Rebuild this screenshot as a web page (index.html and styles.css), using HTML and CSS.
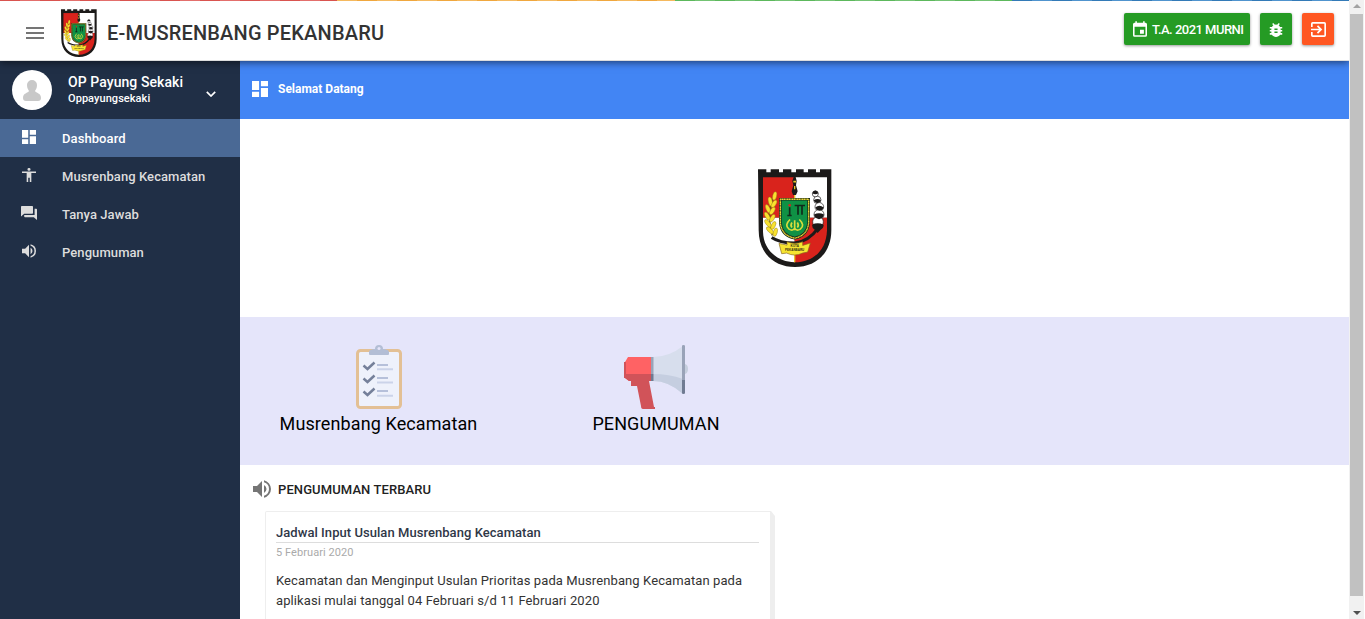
FILE: index.html
```html
<!DOCTYPE html>
<html lang="id">
<head>
<meta charset="utf-8">
<title>E-Musrenbang Pekanbaru</title>
<link rel="stylesheet" href="styles.css">
</head>
<body>
<svg class="defs" aria-hidden="true">
  <symbol id="tiles" viewBox="3 3 18 18"><path d="M3 13h8V3H3zM3 21h8v-6H3zM13 21h8V11h-8zM13 3v6h8V3z"/></symbol>
  <symbol id="sound" viewBox="3 3 18 18"><path d="M3 9v6h4l5 5V4L7 9zM16.500 12A4.500 4.500 0 0 0 14 7.970v8.050A4.500 4.500 0 0 0 16.500 12zM14 3.230v2.060a7 7 0 0 1 0 13.420v2.060a9 9 0 0 0 0-17.540z"/></symbol>
</svg>
<div class="app">
  <div class="page">
    <div class="stripe"><i></i><i></i><i></i><i></i></div>
    <header class="topbar">
      <svg class="burger" viewBox="0 0 18 12"><path d="M0 0h18v2H0zM0 5h18v2H0zM0 10h18v2H0z"/></svg>
      <svg class="logo" viewBox="54 26 222 295" preserveAspectRatio="none"><use href="#crest"/></svg>
      <h1 class="brand">E-MUSRENBANG PEKANBARU</h1>
      <div class="actions">
        <button class="btn year"><svg viewBox="3 1 18 20"><path d="M17 12h-5v5h5zM16 1v2H8V1H6v2H5a2 2 0 0 0-2 2v14a2 2 0 0 0 2 2h14a2 2 0 0 0 2-2V5a2 2 0 0 0-2-2h-1V1zM19 19H5V8h14z"/></svg><span>T.A. 2021 MURNI</span></button>
        <button class="btn square"><svg class="bug" viewBox="4 3 16 18"><path d="M20 8h-2.810a6 6 0 0 0-1.820-1.960L17 4.410 15.590 3l-2.170 2.170a6 6 0 0 0-2.830 0L8.410 3 7 4.410l1.620 1.630A6 6 0 0 0 6.810 8H4v2h2.090A6 6 0 0 0 6 11v1H4v2h2v1q0 .5.090 1H4v2h2.810a6 6 0 0 0 10.380 0H20v-2h-2.090q.09-.5.090-1v-1h2v-2h-2v-1q0-.5-.09-1H20zM14 16h-4v-2h4zM14 12h-4v-2h4z"/></svg></button>
        <button class="btn square exit"><svg class="out" viewBox="3 3 18 18"><path d="M10.090 15.590 11.500 17l5-5-5-5-1.410 1.410L12.670 11H3v2h9.670zM19 3H5a2 2 0 0 0-2 2v4h2V5h14v14H5v-4H3v4a2 2 0 0 0 2 2h14a2 2 0 0 0 2-2V5a2 2 0 0 0-2-2z"/></svg></button>
      </div>
    </header>
    <div class="body">
      <aside class="sidebar">
        <div class="user">
          <svg class="avatar" viewBox="0 0 40 40"><circle cx="20" cy="20" r="20" fill="#fff"/><path fill="#c8c8c8" d="M20 10a5 5 0 0 1 5 5c0 3-1 4-2 6 1 2 6 2 6 7 0 2-1 3-3 3H14c-2 0-3-1-3-3 0-5 5-5 6-7-1-2-2-3-2-6a5 5 0 0 1 5-5z"/></svg>
          <div class="who"><strong>OP Payung Sekaki</strong><small>Oppayungsekaki</small></div>
          <svg class="chev" viewBox="0 0 10 6"><path d="M.8.800 5 5 9.200.800"/></svg>
        </div>
        <nav>
          <a class="item active"><svg><use href="#tiles"/></svg><span>Dashboard</span></a>
          <a class="item"><svg viewBox="3 2 18 20" preserveAspectRatio="none"><path d="M12 2a2 2 0 1 1 0 4 2 2 0 0 1 0-4zM21 9h-6v13h-2v-6h-2v6H9V9H3V7h18z"/></svg><span>Musrenbang Kecamatan</span></a>
          <a class="item"><svg class="chat" viewBox="2 2 20 20" preserveAspectRatio="none"><path d="M21 6h-2v9H6v2a1 1 0 0 0 1 1h11l4 4V7a1 1 0 0 0-1-1zM17 12V3a1 1 0 0 0-1-1H3a1 1 0 0 0-1 1v14l4-4h10a1 1 0 0 0 1-1z"/></svg><span>Tanya Jawab</span></a>
          <a class="item"><svg><use href="#sound"/></svg><span>Pengumuman</span></a>
        </nav>
      </aside>
      <main class="content">
        <div class="heading"><svg><use href="#tiles"/></svg><span>Selamat Datang</span></div>
        <div class="hero">
          <svg class="crest" viewBox="54 26 222 295" preserveAspectRatio="none">
            <g id="crest">
              <path fill="#1c1a19" d="M54 27H79V36H92V27H117V36H129V27H154V36H168V27H191V36H204V27H228V36H240V27H274V210C274 279 228 321 165 321S56 279 56 210Z"/>
              <path fill="#d9231c" d="M69 51H164V173H69Z"/>
              <path fill="#fff" d="M164 51H261V173H164ZM69 173H164V307C112 305 70 270 69 215Z"/>
              <path fill="#d9231c" d="M164 173H261V210C259 269 222 306 164 307Z"/>
              <path fill="#e8c72d" d="M162 51h4v64h-4zM162 280h4v27h-4z"/>
              <path fill="#1c1a19" d="M161 50h6l3 12-2 13 5 18-5 11h-9l-4-11 5-18-3-13z"/>
              <path fill="#e8c72d" d="M160 61h8v6h-8zM162 77h4v10h-4z"/>
              <path fill="none" stroke="#1c1a19" stroke-width="9" d="M95 232Q118 248 164 249Q205 245 234 205"/>
              <path fill="none" stroke="#6b5614" stroke-width="4" d="M104 105Q77 158 97 226"/>
              <g fill="#f9e22e" stroke="#8a7316" stroke-width="1.200">
                <ellipse cx="104" cy="107" rx="6" ry="13" transform="rotate(12 104 107)"/>
                <ellipse cx="91" cy="124" rx="6" ry="14" transform="rotate(-12 91 124)"/><ellipse cx="102" cy="131" rx="6" ry="13" transform="rotate(32 102 131)"/>
                <ellipse cx="84" cy="146" rx="6" ry="14" transform="rotate(-22 84 146)"/><ellipse cx="97" cy="152" rx="6" ry="13" transform="rotate(32 97 152)"/>
                <ellipse cx="82" cy="168" rx="6" ry="14" transform="rotate(-30 82 168)"/><ellipse cx="97" cy="174" rx="6" ry="13" transform="rotate(30 97 174)"/>
                <ellipse cx="84" cy="190" rx="6" ry="14" transform="rotate(-38 84 190)"/><ellipse cx="100" cy="196" rx="6" ry="13" transform="rotate(25 100 196)"/>
                <ellipse cx="90" cy="211" rx="6" ry="14" transform="rotate(-45 90 211)"/><ellipse cx="106" cy="216" rx="6" ry="13" transform="rotate(15 106 216)"/>
              </g>
              <g fill="#fff" stroke="#1c1a19" stroke-width="2">
                <circle cx="226" cy="101" r="9"/><circle cx="232" cy="119" r="11"/><circle cx="238" cy="140" r="13"/><circle cx="237" cy="163" r="15"/><circle cx="234" cy="185" r="16"/>
              </g>
              <path fill="#1c1a19" d="M217 99q2-8 9-8t9 8q-9 6-18 0zM221 120q12-8 22 0-3 8-11 9-8-1-11-9zM226 142q12-10 25 0-3 9-13 10-9-1-12-10zM222 163q15-8 30 0-2 12-15 14-13-2-15-14zM216 194q17-9 35 0 0 10-9 15l-9 10-9-10q-8-5-8-15z"/>
              <path fill="#0f9145" stroke="#172b1c" stroke-width="8" d="M121 117H206V188Q202 227 164 234Q125 227 121 188Z"/>
              <path fill="none" stroke="#e9d435" stroke-width="4" stroke-dasharray="4 1" d="M121 117H206V188Q202 227 164 234Q125 227 121 188Z"/>
              <path fill="none" stroke="#10291a" stroke-width="5" d="M149 141v27M142 166h13M164 136h31M174 136v28M186 136v28"/>
              <circle cx="149" cy="135" r="4" fill="#d9231c"/>
              <path fill="none" stroke="#d9dc3d" stroke-width="5" d="M150 178q-18 17-3 29 12 7 17-3 5 10 17 3 15-12-3-29M164 180v30M156 187q-6 9 0 15M172 187q6 9 0 15"/>
              <path fill="#f6e431" stroke="#8a671c" stroke-width="2" d="M117 250L141 255V245Q165 255 188 245V256L211 249L203 276L188 279Q164 291 140 279L125 281Z"/>
              <g class="crest-text"><text x="164" y="260">KOTA</text><text x="164" y="273">PEKANBARU</text></g>
            </g>
          </svg>
        </div>
        <div class="menu">
          <a class="tile"><svg viewBox="0 0 64 64">
            <rect x="10.500" y="5.500" width="43" height="57" rx="3" fill="#eef1fb" stroke="#e3c094" stroke-width="3"/>
            <path fill="#b3bed5" d="M22 9V7c0-2 3-3 6-3a4 4 0 0 1 8 0c3 0 6 1 6 3v2q0 1-1 1H23q-1 0-1-1z"/><circle cx="32" cy="3.500" r="1.500" fill="#e5e5fa"/>
            <path fill="none" stroke="#75809a" stroke-width="2.500" d="m16.500 20.500 4 3.500 7-6.500m-11 16 4 3.500 7-6.500m-11 16 4 3.500 7-6.500"/>
            <path stroke="#b6c0da" stroke-width="2" d="M30 20h11M30 33h11M30 46h11"/><path stroke="#cbd3e9" stroke-width="2" d="M30 24.300h16M30 37.500h16M30 50.700h16"/>
          </svg><span>Musrenbang Kecamatan</span></a>
          <a class="tile second"><svg viewBox="0 0 64 64">
            <path fill="#c5cedd" d="M60 19q4 0 4 5t-4 5z"/><path fill="#d7deed" d="M29 12Q45 12 59 1V49Q45 36 29 36Z"/><path fill="#c5cee0" d="M29 29Q45 29 59 34V49Q45 36 29 36Z"/>
            <path fill="#ff6264" d="M4 12H28V36H5L1 33H0V17H1Z"/><path fill="#d15359" d="M0 29H28V36H25L30 62H31V64H19Q17 64 17 61L13 41H7V36H5L1 33H0Z"/>
            <path fill="#d15359" d="M0 17h2v16H0z"/><path fill="#99a3b8" d="M27 12h2.500v17H27zM58 1q0-1 1.500-1T61 1v34h-3z"/><path fill="#707b92" d="M27 29h2.500v7H27zM58 35h3v13q0 1-1.500 1T58 48z"/>
          </svg><span>PENGUMUMAN</span></a>
        </div>
        <section class="news">
          <h2><svg><use href="#sound"/></svg><span>PENGUMUMAN TERBARU</span></h2>
          <div class="cardwrap">
            <article class="card">
              <h3><span>Jadwal Input Usulan Musrenbang Kecamatan</span></h3>
              <time>5 Februari 2020</time>
              <p><span>Kecamatan dan Menginput Usulan Prioritas pada Musrenbang Kecamatan pada</span><br><span>aplikasi mulai tanggal 04 Februari s/d 11 Februari 2020</span></p>
            </article>
            <div class="edge"></div>
          </div>
        </section>
      </main>
    </div>
  </div>
  <div class="scroll"><i class="up"></i><div class="thumb"></div><i class="down"></i></div>
</div>
</body>
</html>
```
FILE: styles.css
```css
* { box-sizing: border-box; }
body { margin: 0; font-family: Roboto, sans-serif; overflow: hidden; color: #333; }
svg { display: block; fill: currentColor; flex: none; }
span, strong, small, time { white-space: nowrap; }
.defs { position: absolute; width: 0; height: 0; }
.crest-text { font: bold 9px "Liberation Sans", sans-serif; text-anchor: middle; fill: #322a15; }
.app { display: flex; width: 1365px; height: 619px; }
.page { width: 1349px; display: flex; flex-direction: column; overflow: hidden; }
.stripe { display: flex; height: 1px; flex: none; position: relative; z-index: 2; }
.stripe i { flex: 1; background: repeating-linear-gradient(90deg, #d9534f 0 20px, #e36f6c 20px 40px); }
.stripe i:nth-child(2) { background: repeating-linear-gradient(90deg, #f5b95f 0 20px, #f0a73e 20px 40px); }
.stripe i:nth-child(3) { background: repeating-linear-gradient(90deg, #5cb85c 0 20px, #73c373 20px 40px); }
.stripe i:nth-child(4) { background: repeating-linear-gradient(90deg, #337ab7 0 20px, #5094ce 20px 40px); }
.topbar { height: 60px; flex: none; display: flex; align-items: flex-start; background: #fff; border-bottom: 1px solid #ddd; box-shadow: 0 1px 8px rgba(0,0,0,.6); position: relative; padding-left: 26px; }
.burger { width: 18px; height: 12px; margin-top: 26px; color: #757575; }
.logo { width: 36px; height: 48px; margin: 8px 10px 0 17px; }
.brand { margin: 20px 0 0; font-size: 20px; line-height: 24px; font-weight: 500; letter-spacing: .18px; color: #333; white-space: nowrap; }
.actions { display: flex; gap: 10px; margin: 12px 15px 0 auto; }
.btn { height: 32px; border: 0; border-radius: 2px; background: #259b24; color: #fff; padding: 0; display: flex; align-items: center; justify-content: center; box-shadow: 0 1px 3px rgba(0,0,0,.4); font: 500 13px/18px Roboto, sans-serif; }
.year { width: 126px; gap: 5px; justify-content: flex-start; padding-left: 9px; letter-spacing: -.52px; }
.year svg { width: 14px; height: 16px; }
.year span { padding-top: 1px; }
.square { width: 32px; }
.exit { background: #ff5722; }
.bug { width: 14px; height: 14px; margin-top: 2px; }
.out { width: 15px; height: 15px; margin-top: 1px; }
.body { display: flex; flex: 1; min-height: 0; }
.sidebar { width: 240px; background: #202f46; color: #ddd; flex: none; }
.user { height: 58px; display: flex; padding: 9px 24px 0 12px; color: #fff; }
.avatar { width: 40px; height: 40px; }
.who { display: flex; flex-direction: column; margin-left: 16px; padding-top: 3px; }
.who strong { font-size: 14px; line-height: 18px; font-weight: 500; letter-spacing: .07px; }
.who small { font-size: 11px; line-height: 16px; font-weight: 500; letter-spacing: .06px; }
.chev { width: 10px; height: 6px; margin: 21px 0 0 auto; fill: none; stroke: currentColor; stroke-width: 1.700; }
.item { display: flex; height: 38px; align-items: center; padding-left: 22px; font-size: 13px; font-weight: 500; letter-spacing: .08px; }
.item svg { width: 14px; height: 14px; margin: 0 26px 3px 0; }
.item .chat { width: 16px; height: 14px; margin-left: -1px; margin-right: 25px; }
.active { background: #4a6995; color: #fff; }
.content { flex: 1; background: #fff; min-width: 0; }
.heading { height: 58px; background: #4285f4; color: #fff; display: flex; align-items: center; padding: 0 0 2px 12px; font-size: 12px; font-weight: 700; gap: 10px; }
.heading svg { width: 16px; height: 16px; }
.hero { height: 198px; display: flex; justify-content: center; padding-top: 50px; }
.crest { width: 74px; height: 98px; }
.menu { height: 148px; background: #e5e5fa; display: flex; padding-top: 28px; color: #000; }
.tile { width: 277px; display: flex; flex-direction: column; align-items: center; font-size: 18px; line-height: 30px; letter-spacing: .1px; }
.tile svg { width: 64px; height: 64px; }
.second { width: 278px; }
.news h2 { margin: 0; height: 46px; padding: 2px 0 0 13px; display: flex; align-items: center; gap: 7px; font-size: 13px; font-weight: 500; letter-spacing: .1px; color: #222; }
.news h2 svg { width: 18px; height: 18px; color: #757575; }
.cardwrap { margin-left: 25px; display: flex; height: 108px; }
.card { width: 506px; height: 108px; border: 1px solid #eee; border-bottom: 0; border-radius: 2px 0 0 0; padding: 12px 11px 0 10px; }
.edge { width: 4px; background: #eee; clip-path: polygon(0 0, 100% 5px, 100% 100%, 0 100%); }
.card h3 { margin: 0; height: 19px; border-bottom: 1px solid #ddd; font-size: 13px; line-height: 17px; font-weight: 500; letter-spacing: .05px; color: #2f3747; }
.card time { display: block; color: #aaa; font-size: 11px; line-height: 20px; letter-spacing: .07px; }
.card p { margin: 8px 0 0; font-size: 13px; line-height: 20px; letter-spacing: .1px; color: #333; }
.scroll { width: 16px; background: #f1f1f1; display: flex; flex-direction: column; align-items: center; border-right: 1px solid #fff; }
.up, .down { border: 4px solid transparent; width: 0; height: 0; }
.up { border-top-width: 0; border-bottom-color: #a3a3a3; margin: 4px 0 6px; }
.thumb { width: 13px; height: 582px; background: #c1c1c1; }
.down { border-bottom-width: 0; border-top-color: #505050; margin-top: 15px; }
```
